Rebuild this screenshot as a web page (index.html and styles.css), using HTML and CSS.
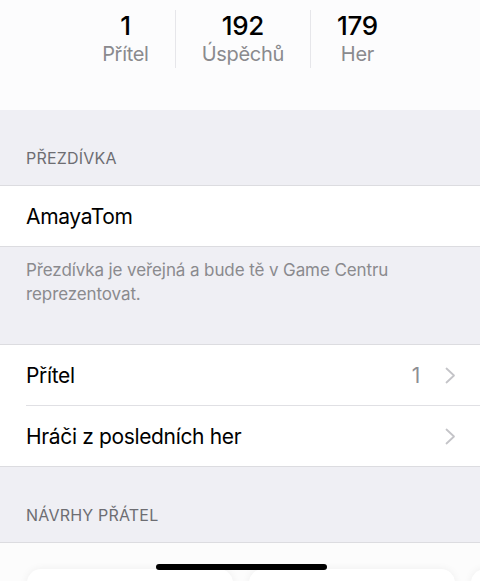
FILE: index.html
```
<!DOCTYPE html>
<html lang="cs">
<head>
<meta charset="utf-8">
<title>Game Center</title>
<link rel="stylesheet" href="styles.css">
</head>
<body>
<div class="screen">
  <div class="profile">
    <div class="stats">
      <div class="stat"><div class="num">1</div><div class="lbl">Přítel</div></div>
      <div class="stat"><div class="num">192</div><div class="lbl">Úspěchů</div></div>
      <div class="stat"><div class="num">179</div><div class="lbl">Her</div></div>
    </div>
  </div>

  <div class="sec-header">PŘEZDÍVKA</div>
  <div class="group">
    <div class="row"><span class="row-title">AmayaTom</span></div>
  </div>
  <div class="sec-footer">Přezdívka je veřejná a bude tě v Game Centru reprezentovat.</div>

  <div class="group">
    <div class="row">
      <span class="row-title">Přítel</span>
      <span class="row-value">1</span>
      <svg class="chev" width="11" height="17" viewBox="0 0 11 17"><path d="M1.5 1.5 L9 8.5 L1.5 15.5" fill="none" stroke="#c4c4c8" stroke-width="1.8" stroke-linecap="round" stroke-linejoin="round"/></svg>
    </div>
    <div class="row">
      <span class="row-title">Hráči z posledních her</span>
      <svg class="chev" width="11" height="17" viewBox="0 0 11 17"><path d="M1.5 1.5 L9 8.5 L1.5 15.5" fill="none" stroke="#c4c4c8" stroke-width="1.8" stroke-linecap="round" stroke-linejoin="round"/></svg>
    </div>
  </div>

  <div class="sec-header">NÁVRHY PŘÁTEL</div>
  <div class="suggest">
    <div class="card"></div>
    <div class="card"></div>
    <div class="card"></div>
  </div>

  <div class="home-indicator"></div>
</div>
</body>
</html>
```
FILE: styles.css
```
* { box-sizing: border-box; }
html, body { margin: 0; padding: 0; }
body {
  font-family: Inter, "Liberation Sans", sans-serif;
  background: #efeff4;
  color: #000;
}
.screen {
  position: relative;
  width: 480px;
  height: 581px;
  overflow: hidden;
  background: #efeff4;
}
.profile {
  height: 110px;
  background: #fcfcfd;
  padding-top: 10px;
}
.stats {
  display: flex;
  justify-content: center;
}
.stat {
  padding: 0 26px;
  height: 58px;
  text-align: center;
}
.stat + .stat { border-left: 1px solid #e6e6ea; }
.num {
  font-size: 26px;
  font-weight: 500;
  line-height: 32px;
  letter-spacing: -0.3px;
}
.lbl {
  font-size: 20px;
  line-height: 24px;
  color: #8a8a8e;
  letter-spacing: -0.3px;
}
.sec-header {
  height: 75px;
  display: flex;
  align-items: flex-end;
  padding: 0 26px 17px;
  font-size: 16px;
  line-height: 20px;
  color: #6d6d72;
  letter-spacing: 0.2px;
}
.group {
  background: #fff;
  border-top: 1px solid #dcdce0;
  border-bottom: 1px solid #dcdce0;
}
.row {
  height: 60px;
  display: flex;
  align-items: center;
  padding: 0 24px 0 26px;
  font-size: 21px;
  letter-spacing: -0.35px;
}
.row + .row { height: 61px; border-top: 1px solid #e0e0e4; margin-left: 26px; padding-left: 0; }
.row-title { flex: 1; }
.row-value { color: #8e8e93; margin-right: 25px; }
.sec-footer {
  height: 97px;
  padding: 11px 26px 0;
  font-size: 17px;
  line-height: 24px;
  color: #8a8a8e;
  letter-spacing: -0.1px;
}
.suggest {
  background: #fcfcfc;
  border-top: 1px solid #dcdce0;
  padding: 26px 0 0 27px;
  display: flex;
  gap: 16px;
  height: 100px;
}
.card {
  flex: 0 0 206px;
  height: 120px;
  background: #fff;
  border-radius: 14px;
  box-shadow: 0 0 8px rgba(0,0,0,0.06);
}
.home-indicator {
  position: absolute;
  left: 156px;
  top: 564px;
  width: 171px;
  height: 6px;
  border-radius: 3px;
  background: #000;
}
```
